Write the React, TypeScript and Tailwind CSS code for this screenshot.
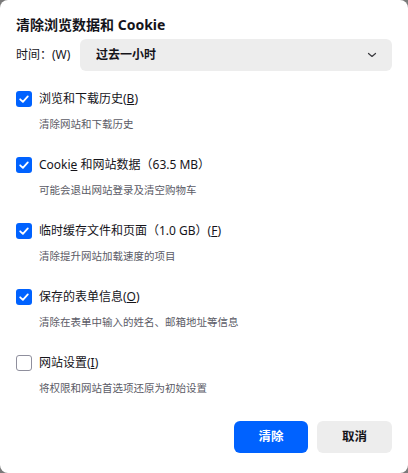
import type { ReactNode } from "react";

const font = {
  fontFamily: '"Noto Sans", "Noto Sans CJK SC", sans-serif',
};

type Item = {
  checked: boolean;
  label: ReactNode;
  desc: string;
};

const items: Item[] = [
  {
    checked: true,
    label: (
      <>
        浏览和下载历史(<u>B</u>)
      </>
    ),
    desc: "清除网站和下载历史",
  },
  {
    checked: true,
    label: (
      <>
        Cooki<u>e</u> 和网站数据（63.5 MB）
      </>
    ),
    desc: "可能会退出网站登录及清空购物车",
  },
  {
    checked: true,
    label: (
      <>
        临时缓存文件和页面（1.0 GB）(<u>F</u>)
      </>
    ),
    desc: "清除提升网站加载速度的项目",
  },
  {
    checked: true,
    label: (
      <>
        保存的表单信息(<u>O</u>)
      </>
    ),
    desc: "清除在表单中输入的姓名、邮箱地址等信息",
  },
  {
    checked: false,
    label: (
      <>
        网站设置(<u>I</u>)
      </>
    ),
    desc: "将权限和网站首选项还原为初始设置",
  },
];

function Checkbox({ checked }: { checked: boolean }) {
  if (!checked) {
    return (
      <span className="h-4 w-4 shrink-0 rounded-[3px] border border-[#8f8f9d] bg-white" />
    );
  }
  return (
    <span className="flex h-4 w-4 shrink-0 items-center justify-center rounded-[3px] bg-[#0062ff]">
      <svg width="12" height="12" viewBox="0 0 12 12" fill="none">
        <path
          d="M2.2 6.3 L4.9 8.9 L9.8 3.4"
          stroke="white"
          strokeWidth="1.8"
          strokeLinecap="round"
          strokeLinejoin="round"
        />
      </svg>
    </span>
  );
}

export default function App() {
  return (
    <div className="h-[473px] w-[408px] bg-[#7a7a7a]" style={font}>
      <div className="flex h-full flex-col rounded-[8px] bg-white px-4 pb-5 pt-[15px] text-[#15141a]">
        <h1 className="text-[14px] font-bold leading-[20px]">
          清除浏览数据和 Cookie
        </h1>

        {/* Time range */}
        <div className="mt-1 flex h-8 items-center">
          <span className="w-16 shrink-0 text-[12px]">时间：(W)</span>
          <button
            type="button"
            className="flex h-8 flex-1 items-center justify-between rounded-[6px] bg-[#ededed] pl-4 pr-[15px] text-left"
          >
            <span className="text-[12px] font-bold">过去一小时</span>
            <svg width="10" height="10" viewBox="0 0 10 10" fill="none">
              <path
                d="M1.5 3.5 L5 6.5 L8.5 3.5"
                stroke="#3a3a3f"
                strokeWidth="1.2"
                strokeLinecap="round"
                strokeLinejoin="round"
              />
            </svg>
          </button>
        </div>

        <div className="mt-5 flex flex-col">
          {items.map((it, i) => (
            <div key={i} className="h-[66px]">
              <div className="flex h-4 items-center gap-[7px]">
                <Checkbox checked={it.checked} />
                <span className="whitespace-nowrap text-[12px] leading-4">
                  {it.label}
                </span>
              </div>
              <p className="ml-[23px] mt-[9px] text-[10.5px] leading-4 text-[#5b5b66]">
                {it.desc}
              </p>
            </div>
          ))}
        </div>

        <div className="mt-auto flex justify-end gap-[9px]">
          <button
            type="button"
            className="h-8 w-[74px] rounded-[6px] bg-[#0062ff] text-[12.5px] font-bold text-white"
          >
            清除
          </button>
          <button
            type="button"
            className="h-8 w-[75px] rounded-[6px] bg-[#ededed] text-[12.5px] font-bold text-[#15141a]"
          >
            取消
          </button>
        </div>
      </div>
    </div>
  );
}
